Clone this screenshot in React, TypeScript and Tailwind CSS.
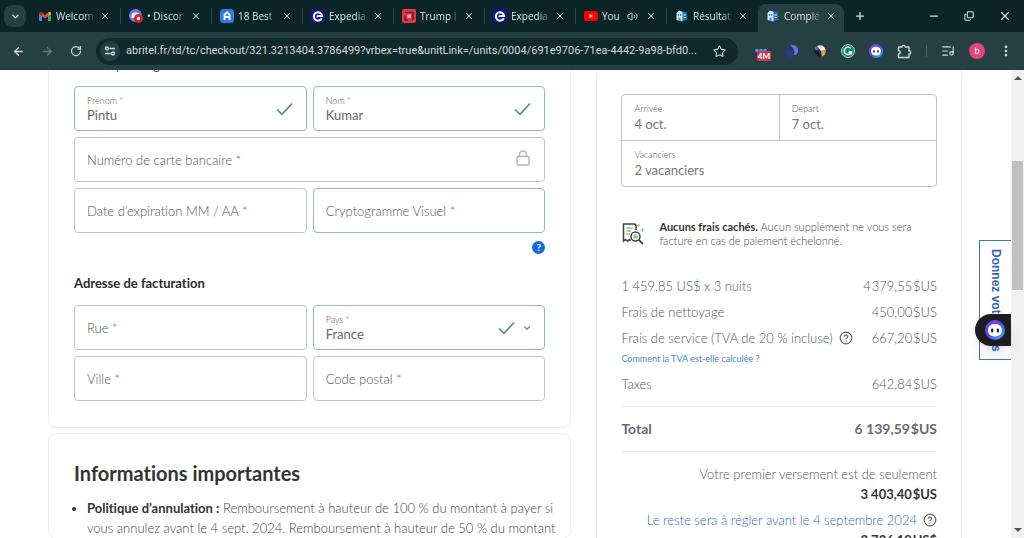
import type { ReactNode } from "react";
import {
  ArrowLeft,
  ArrowRight,
  ChevronDown,
  CircleHelp,
  Copy,
  EllipsisVertical,
  ListMusic,
  Minus,
  Plus,
  RotateCw,
  Star,
  Volume2,
  X,
} from "lucide-react";

type Tab = {
  title: string;
  icon: ReactNode;
  audio?: boolean;
  active?: boolean;
};

function GmailIcon() {
  return (
    <svg viewBox="0 0 24 18" className="w-3 h-[9px]">
      <path fill="#4285f4" d="M0 2v14a2 2 0 0 0 2 2h4V7L0 2z" />
      <path fill="#34a853" d="M24 2v14a2 2 0 0 1-2 2h-4V7l6-5z" />
      <path fill="#ea4335" d="M5 0l7 6 7-6v8l-7 5-7-5z" />
      <path fill="#c5221f" d="M0 2.500C0 .5 3-1 5 .4V8L0 4z" />
      <path fill="#fbbc04" d="M24 2.500C24 .5 21-1 19 .4V8l5-4z" />
    </svg>
  );
}

function DiscordIcon() {
  return (
    <svg viewBox="0 0 14 14" className="size-3.5">
      <circle cx="6.500" cy="6.500" r="6.500" fill="#6a74e8" />
      <path
        fill="#fff"
        d="M3 4.600Q6.500 2.600 10 4.600L10.800 8.500 9 9.600 8.300 8.800H4.700L4 9.600 2.200 8.500z"
      />
      <circle cx="9.500" cy="9.500" r="4.500" fill="#d3202f" />
      <circle cx="9.500" cy="9.500" r="1.700" fill="#fff" />
    </svg>
  );
}

function HostingIcon() {
  return (
    <svg viewBox="0 0 14 14" className="size-3.5">
      <rect width="14" height="14" rx="3.500" fill="#2d7be0" />
      <path
        fill="none"
        stroke="#fff"
        strokeWidth="1.800"
        d="M4.500 11V5.500L7 3.500l2.500 2V11M4.500 8h5"
      />
    </svg>
  );
}

function ExpediaIcon() {
  return (
    <svg viewBox="0 0 14 14" className="size-3.5">
      <rect width="14" height="14" rx="1.500" fill="#10128e" />
      <path
        fill="none"
        stroke="#fff"
        strokeWidth="2"
        d="M10.800 9.300A4.200 4.200 0 1 1 11.200 7H7.200c-.8 0-1 .6-.5 1.100"
      />
    </svg>
  );
}

function NewsIcon() {
  return (
    <svg viewBox="0 0 14 14" className="size-3.5">
      <rect width="14" height="14" rx="2" fill="#ea3348" />
      <path
        fill="none"
        stroke="#701a2c"
        strokeWidth="1.500"
        d="M3 3.500h8v7.500M3 6.500v4.500h3"
      />
      <rect x="5.500" y="5.500" width="3.500" height="3.500" fill="#f6b7a0" />
    </svg>
  );
}

function YoutubeIcon() {
  return (
    <svg viewBox="0 0 14 10" className="w-3.5 h-2.5">
      <rect width="14" height="10" rx="2.500" fill="#f00" />
      <path fill="#fff" d="M5.600 3v4L9.200 5z" />
    </svg>
  );
}

function AbritelIcon() {
  return (
    <svg viewBox="0 0 14 14" className="size-3.5">
      <path fill="#1e6fb5" d="M5 2l7 1.200v8L5 12.500z" />
      <path fill="#d6edfa" d="M1.500 4L4 1.500 7.500 3v9.500L1.500 11z" />
      <path fill="#3a8fcd" d="M2.800 5h1.400v2H2.800zM5 5h1.400v2H5zM3.500 8.500h2V12h-2z" />
      <path stroke="#fff" d="M8.500 6h2.500M8.500 8.500h2.500" />
    </svg>
  );
}

function MascotIcon() {
  return (
    <svg viewBox="0 0 20 20" className="size-full">
      <defs>
        <linearGradient id="mascot" x1="0" y1="0" x2="1" y2="1">
          <stop offset="0" stopColor="#8a3ff0" />
          <stop offset="0.5" stopColor="#5b45f0" />
          <stop offset="1" stopColor="#25c3ee" />
        </linearGradient>
      </defs>
      <circle cx="10" cy="10" r="10" fill="url(#mascot)" />
      <rect x="3" y="4" width="14" height="12.500" rx="6" fill="#fff" />
      <rect x="6" y="8.500" width="2.200" height="4" rx="1" fill="#191945" />
      <rect x="11.800" y="8.500" width="2.200" height="4" rx="1" fill="#191945" />
    </svg>
  );
}

function TuneIcon() {
  return (
    <svg
      viewBox="0 0 12 12"
      className="size-3"
      fill="none"
      stroke="#cfdcdc"
      strokeWidth="1.300"
    >
      <circle cx="3" cy="3.500" r="1.500" />
      <path d="M5.500 3.500H11M1 8.500h5.500" />
      <circle cx="9" cy="8.500" r="1.500" />
    </svg>
  );
}

function ExtensionsIcon() {
  return (
    <svg
      viewBox="0 0 15 15"
      className="size-[15px]"
      fill="none"
      stroke="currentColor"
      strokeWidth="1.400"
      strokeLinejoin="round"
    >
      <path d="M1.500 3H5a1.600 1.600 0 0 1 3.200 0H12v3.800a1.600 1.600 0 0 1 0 3.200v3.500H1.500V10a1.700 1.700 0 0 0 0-3.400z" />
    </svg>
  );
}

function InvoiceIcon() {
  return (
    <svg viewBox="0 0 24 24" className="size-6" fill="none">
      <path
        stroke="#3c4043"
        strokeWidth="1.500"
        d="M15 8V4a2 2 0 0 0-2-2H2.500V19l2-1.300L6.500 19l2-1.300 1.500 1"
      />
      <path stroke="#92c79a" strokeWidth="1.500" d="M5.500 6H12M5.500 9H10M5.500 12H9" />
      <circle cx="14.500" cy="14.500" r="4.500" stroke="#3c4043" strokeWidth="1.500" />
      <circle cx="14.500" cy="14.500" r="2.300" fill="#92c79a" />
      <path stroke="#3c4043" strokeWidth="1.800" d="M17.800 17.800L22 22" />
      <path stroke="#92c79a" d="M17.500 2v3M16 3.500h3M21.500 6v4M19.500 8h4" />
    </svg>
  );
}

const TABS: Tab[] = [
  { title: "Welcom", icon: <GmailIcon /> },
  { title: "• Discor", icon: <DiscordIcon /> },
  { title: "18 Best", icon: <HostingIcon /> },
  { title: "Expedia", icon: <ExpediaIcon /> },
  { title: "Trump I", icon: <NewsIcon /> },
  { title: "Expedia", icon: <ExpediaIcon /> },
  { title: "You", icon: <YoutubeIcon />, audio: true },
  { title: "Résultat", icon: <AbritelIcon /> },
  { title: "Complé", icon: <AbritelIcon />, active: true },
];

function TabStrip() {
  return (
    <div className="flex h-8 items-center bg-[#0a2527] pl-1 text-[#dce5e5]">
      <button
        aria-label="Rechercher dans les onglets"
        className="mr-1 flex size-[22px] items-center justify-center rounded-lg bg-[#263f42]"
      >
        <ChevronDown size={11} strokeWidth={3} />
      </button>
      {TABS.map((tab, i) => (
        <div
          key={i}
          className={
            tab.active
              ? "mt-1 flex h-7 w-[86px] items-center rounded-t-lg bg-[#263f42] pb-1 pl-2 pr-2"
              : "flex h-4 w-[91px] items-center pl-2 pr-2.5 " +
                (i < 7 ? "border-r border-[#2c4547]" : "")
          }
        >
          <span className="flex w-3.5 shrink-0 justify-center">{tab.icon}</span>
          <span
            className={
              "ml-1 flex-1 overflow-hidden whitespace-nowrap text-[10px] leading-4 font-['Open_Sans',sans-serif] " +
              (tab.audio ? "" : "mask-r-from-70%")
            }
          >
            {tab.title}
          </span>
          {tab.audio && <Volume2 size={11} className="mr-1 shrink-0" />}
          <button aria-label="Fermer l'onglet" className="ml-1 shrink-0">
            <X size={10} strokeWidth={2.5} />
          </button>
        </div>
      ))}
      <button aria-label="Nouvel onglet" className="ml-2.5">
        <Plus size={12} strokeWidth={2.5} />
      </button>
      <div className="ml-auto flex items-center gap-6 pr-3">
        <button aria-label="Réduire">
          <Minus size={12} strokeWidth={2.5} />
        </button>
        <button aria-label="Restaurer">
          <Copy size={10} strokeWidth={2.5} className="-scale-y-100" />
        </button>
        <button aria-label="Fermer">
          <X size={14} />
        </button>
      </div>
    </div>
  );
}

function Toolbar() {
  return (
    <div className="flex h-[38px] items-center bg-[#263f42] pl-3 pr-[11px] text-[#cfdcdc]">
      <button aria-label="Retour">
        <ArrowLeft size={13} strokeWidth={2.5} />
      </button>
      <button aria-label="Avancer" className="ml-4 text-[#667c7f]">
        <ArrowRight size={13} strokeWidth={2.5} />
      </button>
      <button aria-label="Actualiser" className="ml-4">
        <RotateCw size={12} strokeWidth={2.5} />
      </button>
      <div className="ml-3.5 flex h-[27px] min-w-0 flex-1 items-center rounded-full bg-[#10292c] pl-1 pr-3">
        <span className="flex size-5 shrink-0 items-center justify-center rounded-full bg-[#263f42]">
          <TuneIcon />
        </span>
        <input
          aria-label="Adresse"
          readOnly
          className="ml-1.5 min-w-0 flex-1 truncate bg-transparent text-[11px] outline-none font-[Roboto,sans-serif]"
          value="abritel.fr/td/tc/checkout/321.3213404.3786499?vrbex=true&unitLink=/units/0004/691e9706-71ea-4442-9a98-bfd0..."
        />
        <button aria-label="Ajouter aux favoris" className="ml-2">
          <Star size={13} strokeWidth={2} />
        </button>
      </div>
      <div className="ml-[17px] flex shrink-0 items-center gap-3.5">
        <button aria-label="Extension 4M" className="relative h-5 w-4">
          <svg viewBox="0 0 12 6" className="h-1.5 w-3" fill="#4b9be0">
            <circle cx="2" cy="2.500" r="1.800" />
            <circle cx="6" cy="2.500" r="1.800" />
            <circle cx="10" cy="2.500" r="1.800" />
          </svg>
          <span className="absolute right-0 bottom-0 rounded-xs bg-[#c9375c] px-px text-[8px] leading-[10px] font-bold text-white">
            4M
          </span>
        </button>
        <button aria-label="Extension">
          <svg viewBox="0 0 14 14" className="size-3.5">
            <path fill="#33309c" d="M1 3l8 7-3 4C2 13 0 8 1 3z" />
            <path fill="#6573f0" d="M5 1c5-1 9 2 8 7-.5 2-2 3-4 3 1-4 0-7-4-10z" />
          </svg>
        </button>
        <button aria-label="Extension">
          <svg viewBox="0 0 14 14" className="size-3.5">
            <path fill="#e9edee" d="M4 2c4-2 8 0 8.500 4L8 7z" />
            <path fill="#e7a13c" d="M12.500 6c.5 4-1 6-4 6.500L8 7z" />
            <path fill="#151c3f" d="M1 6l7 1 .5 5.500C4 13 1 10 1 6z" />
            <circle cx="3.500" cy="4.500" r="1.800" fill="#6d7b7d" />
          </svg>
        </button>
        <button aria-label="Grammarly">
          <svg viewBox="0 0 14 14" className="size-3.5" fill="none">
            <circle cx="7" cy="7" r="6.500" fill="#12866f" stroke="#b9dcd2" />
            <path
              stroke="#fff"
              strokeWidth="1.400"
              d="M9.800 4.400A3.700 3.700 0 1 0 10.500 8H7.500M10.500 7.500v3"
            />
          </svg>
        </button>
        <button aria-label="Assistant" className="size-3.5">
          <MascotIcon />
        </button>
        <button aria-label="Extensions">
          <ExtensionsIcon />
        </button>
        <span className="h-3 w-px bg-[#4a6163]" />
        <button aria-label="Contenu multimédia">
          <ListMusic size={14} />
        </button>
        <button
          aria-label="Profil"
          className="size-4 rounded-full bg-[#e8437a] text-[9px] leading-4 text-white"
        >
          b
        </button>
        <button aria-label="Menu">
          <EllipsisVertical size={14} strokeWidth={2.5} />
        </button>
      </div>
    </div>
  );
}

function Field({
  label,
  value,
  valid,
  icon,
  className = "",
}: {
  label: string;
  value?: string;
  valid?: boolean;
  icon?: ReactNode;
  className?: string;
}) {
  return (
    <label
      className={`relative flex h-[45px] items-center rounded border px-3 ${
        valid ? "border-[#8fbfa9]" : "border-[#c4c4c4]"
      } ${className}`}
    >
      <span className="flex min-w-0 flex-1 flex-col">
        <span
          className={
            value
              ? "text-[9px] leading-3 text-[#555]"
              : "text-[13px] leading-5 text-[#555]"
          }
        >
          {label} <span className="text-[#cf4f45]">*</span>
        </span>
        {value ? (
          <input
            defaultValue={value}
            className="w-full bg-transparent text-[13px] leading-4 font-normal text-[#666] outline-none"
          />
        ) : (
          <input className="absolute inset-0 bg-transparent px-3 text-[13px] text-[#666] outline-none" />
        )}
      </span>
      {icon}
    </label>
  );
}

function ValidMark() {
  return (
    <svg
      viewBox="0 0 17 14"
      className="mr-px h-3.5 w-[17px] shrink-0"
      fill="none"
      stroke="#4f957a"
      strokeWidth="1.700"
    >
      <path d="M1 7.500l5 4.800L16 1.500" />
    </svg>
  );
}

function PaymentForm() {
  return (
    <section className="rounded-lg border border-[#ececec] px-[25px] pt-2.5 pb-[26px]">
      <p className="text-[13px] leading-4 font-normal text-[#555]">
        * Champs obligatoires
      </p>
      <div className="mt-[13px] grid grid-cols-2 gap-1.5">
        <Field label="Prénom" value="Pintu" valid icon={<ValidMark />} />
        <Field label="Nom" value="Kumar" valid icon={<ValidMark />} />
        <Field
          label="Numéro de carte bancaire"
          className="col-span-2"
          icon={
            <svg
              viewBox="0 0 14 16"
              className="mr-0.5 mb-1 h-4 w-3.5"
              fill="none"
              stroke="#b4b4b4"
              strokeWidth="1.400"
            >
              <rect x="1" y="6.500" width="12" height="8.500" rx="1" />
              <path d="M3.500 6.500V4.500a3.500 3.500 0 0 1 7 0v2" />
            </svg>
          }
        />
        <Field label="Date d’expiration MM / AA" />
        <Field label="Cryptogramme Visuel" valid />
      </div>
      <div className="mt-2 flex justify-end">
        <button
          aria-label="Aide"
          className="size-[13px] rounded-full bg-[#1668e3] text-[10px] leading-[13px] font-bold text-white"
        >
          ?
        </button>
      </div>
      <h3 className="mt-[19px] text-[13px] leading-5 font-bold text-[#2b2b2b]">
        Adresse de facturation
      </h3>
      <div className="mt-3 grid grid-cols-2 gap-1.5">
        <Field label="Rue" />
        <label className="flex h-[45px] items-center rounded border border-[#8fbfa9] px-3">
          <span className="flex min-w-0 flex-1 flex-col">
            <span className="text-[9px] leading-3 text-[#555]">
              Pays <span className="text-[#cf4f45]">*</span>
            </span>
            <select className="w-full appearance-none bg-transparent text-[13px] leading-4 font-normal text-[#666] outline-none">
              <option>France</option>
            </select>
          </span>
          <ValidMark />
          <ChevronDown size={10} strokeWidth={3} className="ml-1.5 text-[#868686]" />
        </label>
        <Field label="Ville" />
        <Field label="Code postal" />
      </div>
    </section>
  );
}

function ImportantInfo() {
  return (
    <section className="mt-[5px] rounded-lg border border-[#ececec] pt-[25px] pr-2 pl-[25px]">
      <h2 className="text-xl leading-7 font-bold text-[#333]">
        Informations importantes
      </h2>
      <ul className="mt-[11px] list-disc pl-[13px] text-[13px] leading-5 text-[#444] marker:text-[#333]">
        <li>
          <strong className="font-bold text-[#333]">
            Politique d’annulation&nbsp;:
          </strong>{" "}
          Remboursement à hauteur de 100&nbsp;% du montant à payer si vous
          annulez avant le 4 sept. 2024. Remboursement à hauteur de 50&nbsp;% du
          montant
        </li>
      </ul>
    </section>
  );
}

function StayCell({ label, value }: { label: string; value: string }) {
  return (
    <button className="flex h-[45px] flex-1 flex-col justify-center px-3 text-left">
      <span className="text-[9px] leading-3 text-[#555]">{label}</span>
      <span className="text-[13px] leading-[18px] font-normal text-[#777]">
        {value}
      </span>
    </button>
  );
}

function PriceRow({ label, amount }: { label: ReactNode; amount: string }) {
  return (
    <div className="flex justify-between">
      <dt className="flex items-center">{label}</dt>
      <dd>{amount}</dd>
    </div>
  );
}

function Summary() {
  return (
    <aside className="w-2/5 shrink-0 border-x border-[#ececec] px-6 pt-12 text-[13px] leading-5 text-[#525666]">
      <div className="rounded border border-[#c4c4c4]">
        <div className="flex divide-x divide-[#c4c4c4] border-b border-[#c4c4c4]">
          <StayCell label="Arrivée" value="4 oct." />
          <StayCell label="Départ" value="7 oct." />
        </div>
        <div className="flex">
          <StayCell label="Vacanciers" value="2 vacanciers" />
        </div>
      </div>

      <div className="mt-[33px] flex items-center text-[11px] leading-[14px] text-[#444]">
        <InvoiceIcon />
        <p className="ml-3.5 flex-1">
          <strong className="font-bold text-[#333]">
            Aucuns frais cachés.
          </strong>{" "}
          Aucun supplément ne vous sera facturé en cas de paiement échelonné.
        </p>
      </div>

      <dl className="mt-7 flex flex-col gap-1.5">
        <PriceRow
          label="1 459,85 US$ x 3 nuits"
          amount={"4\u200a379,55\u200a$US"}
        />
        <PriceRow label="Frais de nettoyage" amount={"450,00\u200a$US"} />
        <PriceRow
          label={
            <>
              Frais de service (TVA de 20 % incluse)
              <CircleHelp size={14} className="ml-1.5 text-[#666]" />
            </>
          }
          amount={"667,20\u200a$US"}
        />
      </dl>
      <a
        href="#"
        className="mt-1 block text-[9px] leading-[14px] font-normal text-[#4d83d6]"
      >
        Comment la TVA est-elle calculée ?
      </a>
      <dl className="mt-2">
        <PriceRow label="Taxes" amount={"642,84\u200a$US"} />
      </dl>

      <dl className="mt-3 border-y border-[#ececec] py-3 text-sm leading-5 font-bold text-[#666a76]">
        <PriceRow label="Total" amount={"6 139,59\u200a$US"} />
      </dl>

      <div className="mt-3 text-right">
        <p>Votre premier versement est de seulement</p>
        <p className="font-bold text-[#333]">{"3 403,40\u200a$US"}</p>
        <div className="mt-1.5 flex items-center justify-end">
          <a href="#" className="text-[#2f68c8]">
            Le reste sera à régler avant le 4 septembre 2024
          </a>
          <CircleHelp size={14} className="ml-1.5 text-[#666]" />
        </div>
        <p className="font-bold text-[#333]">{"2 736,19\u200aUS$"}</p>
      </div>
    </aside>
  );
}

export default function App() {
  return (
    <div className="flex h-screen flex-col overflow-hidden bg-white font-[Lato,sans-serif] [font-variant-ligatures:none]">
      <TabStrip />
      <Toolbar />
      <div className="relative flex min-h-0 flex-1 overflow-hidden">
        {/* Page content, scrolled down a little */}
        <main className="-mt-6 flex flex-1 gap-[25px] pr-[49px] pl-12 font-light">
          <div className="flex-1">
            <PaymentForm />
            <ImportantInfo />
          </div>
          <Summary />
        </main>

        {/* Scrollbar */}
        <div className="flex w-[13px] flex-col items-center bg-[#f1f1f1] py-1.5">
          <span className="border-x-4 border-b-4 border-transparent border-b-[#555]" />
          <span className="mt-[81px] h-[129px] w-[11px] bg-[#c1c1c1]" />
          <span className="mt-auto border-x-4 border-t-4 border-transparent border-t-[#555]" />
        </div>

        {/* Feedback tab and assistant bubble */}
        <button className="absolute top-[170px] right-[13px] h-[120px] w-8 border border-r-0 border-[#4673c4] bg-white text-xs font-bold text-[#3563ba] [writing-mode:vertical-rl] font-['Liberation_Sans',sans-serif]">
          Donnez votre avis
        </button>
        <button
          aria-label="Ouvrir l'assistant"
          className="absolute top-[244px] right-[13px] flex h-8 w-9 items-center rounded-l-full bg-[#1d1d1f] pl-2.5 shadow-lg"
        >
          <span className="size-5">
            <MascotIcon />
          </span>
        </button>
      </div>
    </div>
  );
}
